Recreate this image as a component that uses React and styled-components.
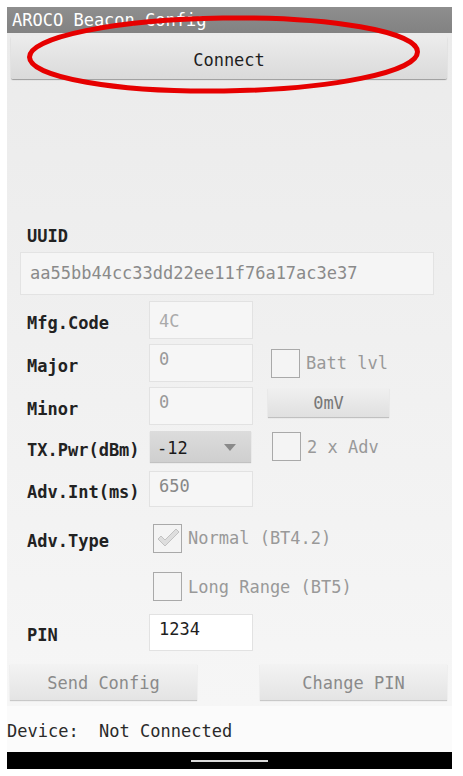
import React from "react";
import styled, { createGlobalStyle } from "styled-components";

const Global = createGlobalStyle`
  html, body { margin: 0; padding: 0; background: #ffffff; }
  body { font-family: "DejaVu Sans Mono", "Liberation Mono", monospace; }
`;

const Page = styled.div`
  position: relative;
  width: 463px;
  height: 776px;
  padding-top: 7px;
  box-sizing: border-box;
`;

const Screen = styled.div`
  margin-left: 7px;
  width: 445px;
  display: flex;
  flex-direction: column;
`;

const TitleBar = styled.div`
  height: 26px;
  background: linear-gradient(#8e8e8e, #828282);
  color: #ffffff;
  font-size: 17px;
  line-height: 26px;
  padding-left: 5px;
  white-space: nowrap;
`;

const Content = styled.div`
  background: linear-gradient(#ebebeb, #f6f6f6);
  height: 673px;
  display: flex;
  flex-direction: column;
  padding-top: 3px;
  box-sizing: border-box;
`;

const ConnectButton = styled.div`
  margin: 0 5px 0 4px;
  height: 43px;
  box-sizing: border-box;
  padding-top: 4px;
  background: linear-gradient(#ececec, #dadada);
  border-radius: 2px;
  box-shadow: 0 1px 1px rgba(0, 0, 0, 0.35);
  display: flex;
  align-items: center;
  justify-content: center;
  font-size: 17px;
  color: #1e1e1e;
`;

const Spacer = styled.div`
  height: ${(p) => p.h}px;
  flex: none;
`;

const SectionLabel = styled.div`
  margin-left: 20px;
  height: 20px;
  line-height: 20px;
  font-size: 17px;
  font-weight: bold;
  color: #222;
`;

const WideInput = styled.div`
  margin: 6px 0 3px 13px;
  width: 414px;
  height: 43px;
  box-sizing: border-box;
  background: #f5f5f5;
  border: 1px solid #e3e3e3;
  font-size: 17px;
  color: #8a8a8a;
  padding-left: 9px;
  line-height: 41px;
`;

const Row = styled.div`
  height: ${(p) => p.h}px;
  display: flex;
  align-items: center;
  padding-left: 20px;
  flex: none;
`;

const Label = styled.div`
  width: 122px;
  flex: none;
  font-size: 17px;
  font-weight: bold;
  color: #222;
  white-space: nowrap;
  transform: translateY(3px);
`;

const Field = styled.div`
  width: 104px;
  height: ${(p) => p.h}px;
  box-sizing: border-box;
  flex: none;
  background: ${(p) => (p.white ? "#ffffff" : "#f6f6f6")};
  border: 1px solid #e2e2e2;
  font-size: 17px;
  color: ${(p) => p.color || "#999"};
  padding: ${(p) => p.pt || 4}px 0 0 9px;
  line-height: 20px;
`;

const Spinner = styled.div`
  margin-left: 1px;
  width: 101px;
  height: 31px;
  box-sizing: border-box;
  flex: none;
  background: linear-gradient(#dcdcdc, #cfcfcf);
  box-shadow: 0 1px 1px rgba(0, 0, 0, 0.2);
  display: flex;
  align-items: center;
  justify-content: space-between;
  padding: 2px 15px 0 7px;
  font-size: 17px;
  color: #1a1a1a;
`;

const Check = styled.div`
  display: flex;
  align-items: center;
  margin-left: ${(p) => p.ml || 0}px;
  gap: 6px;
  font-size: 17px;
  color: #999;
  white-space: nowrap;
`;

const Box = styled.div`
  width: 29px;
  height: 29px;
  box-sizing: border-box;
  border: 1.5px solid #a9a9a9;
  background: #f4f4f4;
  display: flex;
  align-items: center;
  justify-content: center;
  flex: none;
`;

const SmallButton = styled.div`
  margin-left: 15px;
  align-self: flex-start;
  margin-top: 3px;
  width: 121px;
  height: 29px;
  background: linear-gradient(#f0f0f0, #e0e0e0);
  box-shadow: 0 1px 1px rgba(0, 0, 0, 0.2);
  display: flex;
  align-items: center;
  justify-content: center;
  font-size: 17px;
  color: #777;
`;

const ButtonRow = styled.div`
  display: flex;
  justify-content: space-between;
  margin: 9px 5px 0 3px;
`;

const ActionButton = styled.div`
  width: 187px;
  height: 36px;
  box-sizing: border-box;
  padding-top: 2px;
  background: linear-gradient(#f3f3f3, #e4e4e4);
  box-shadow: 0 1px 1px rgba(0, 0, 0, 0.18);
  display: flex;
  align-items: center;
  justify-content: center;
  font-size: 17px;
  color: #8a8a8a;
`;

const StatusRow = styled.div`
  height: 46px;
  box-sizing: border-box;
  padding-top: 4px;
  background: #fbfbfb;
  display: flex;
  align-items: center;
  font-size: 17px;
  color: #2a2a2a;
  white-space: pre;
`;

const NavBar = styled.div`
  height: 17px;
  background: #000;
  display: flex;
  align-items: center;
  justify-content: center;
`;

const NavPill = styled.div`
  width: 77px;
  height: 2px;
  background: #d8d8d8;
`;

const Overlay = styled.svg`
  position: absolute;
  left: 0;
  top: 0;
  pointer-events: none;
`;

function CheckBox({ checked, label, ml }) {
  return (
    <Check ml={ml}>
      <Box>
        {checked && (
          <svg width="24" height="22" viewBox="0 0 24 22">
            <path
              d="M2 12 L5 9 L9 13 L20 2 L23 5 L9 19 Z"
              fill="#dedede"
              stroke="#c2c2c2"
              strokeWidth="1"
              strokeLinejoin="round"
            />
          </svg>
        )}
      </Box>
      {label}
    </Check>
  );
}

export default function App() {
  return (
    <Page>
      <Global />
      <Screen>
        <TitleBar>AROCO Beacon Config</TitleBar>
        <Content>
          <ConnectButton>Connect</ConnectButton>
          <Spacer h={147} />
          <SectionLabel>UUID</SectionLabel>
          <WideInput>aa55bb44cc33dd22ee11f76a17ac3e37</WideInput>
          <Row h={43}>
            <Label>Mfg.Code</Label>
            <Field h={38} pt={9} color="#aaa">4C</Field>
          </Row>
          <Row h={44}>
            <Label>Major</Label>
            <Field h={38}>0</Field>
            <CheckBox ml={18} label="Batt lvl" />
          </Row>
          <Row h={42}>
            <Label>Minor</Label>
            <Field h={38}>0</Field>
            <SmallButton>0mV</SmallButton>
          </Row>
          <Row h={39}>
            <Label>TX.Pwr(dBm)</Label>
            <Spinner>
              <span>-12</span>
              <svg width="12" height="7" viewBox="0 0 12 7">
                <path d="M0 0 H12 L6 7 Z" fill="#8a8a8a" />
              </svg>
            </Spinner>
            <CheckBox ml={21} label="2 x Adv" />
          </Row>
          <Row h={46}>
            <Label>Adv.Int(ms)</Label>
            <Field h={36} color="#888">650</Field>
          </Row>
          <Row h={52}>
            <Label>Adv.Type</Label>
            <CheckBox ml={4} checked label="Normal (BT4.2)" />
          </Row>
          <Row h={45}>
            <Label />
            <CheckBox ml={4} label="Long Range (BT5)" />
          </Row>
          <Row h={46}>
            <Label>PIN</Label>
            <Field h={37} white color="#1e1e1e">1234</Field>
          </Row>
          <ButtonRow>
            <ActionButton>Send Config</ActionButton>
            <ActionButton>Change PIN</ActionButton>
          </ButtonRow>
        </Content>
        <StatusRow>{"Device:  Not Connected"}</StatusRow>
        <NavBar>
          <NavPill />
        </NavBar>
      </Screen>
      <Overlay width="463" height="120" viewBox="0 0 463 120">
        <ellipse
          cx="223.5"
          cy="54.5"
          rx="194"
          ry="36.5"
          fill="none"
          stroke="#e60000"
          strokeWidth="5"
          transform="rotate(-0.8 223.5 54.5)"
        />
      </Overlay>
    </Page>
  );
}
